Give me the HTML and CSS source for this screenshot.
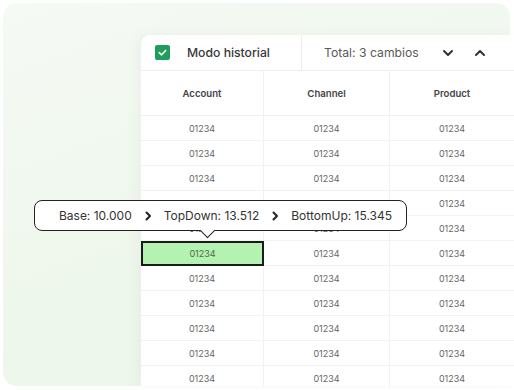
FILE: index.html
```html
<!DOCTYPE html>
<html lang="es">

<head>
    <meta charset="UTF-8">
    <meta name="viewport" content="width=device-width, initial-scale=1.0">
    <title>Modo historial</title>
    <link rel="stylesheet" href="styles.css">
</head>

<body>
    <div class="card">
        <div class="panel">
            <div class="toolbar">
                <div class="mode">
                    <span class="checkbox">
                        <svg width="11" height="11" viewBox="0 0 12 12">
                            <path d="M2.5 6.2 L5 8.5 L9.5 3.8" fill="none" stroke="#fff" stroke-width="1.8" stroke-linecap="round" stroke-linejoin="round"/>
                        </svg>
                    </span>
                    <span class="mode-label">Modo historial</span>
                </div>
                <div class="changes">
                    <span class="total">Total: 3 cambios</span>
                    <svg class="nav" width="12" height="12" viewBox="0 0 12 12">
                        <path d="M2 4 L6 8 L10 4" fill="none" stroke="#333" stroke-width="2" stroke-linecap="round" stroke-linejoin="round"/>
                    </svg>
                    <svg class="nav" width="12" height="12" viewBox="0 0 12 12">
                        <path d="M2 8 L6 4 L10 8" fill="none" stroke="#333" stroke-width="2" stroke-linecap="round" stroke-linejoin="round"/>
                    </svg>
                </div>
            </div>
            <div class="grid">
                <div class="head">Account</div>
                <div class="head">Channel</div>
                <div class="head">Product</div>
            </div>
            <div class="grid" id="rows"></div>
        </div>

        <div class="tooltip">
            <span>Base: 10.000</span>
            <svg width="10" height="10" viewBox="0 0 10 10">
                <path d="M3.5 1.5 L7 5 L3.5 8.5" fill="none" stroke="#222" stroke-width="2" stroke-linecap="round" stroke-linejoin="round"/>
            </svg>
            <span>TopDown: 13.512</span>
            <svg width="10" height="10" viewBox="0 0 10 10">
                <path d="M3.5 1.5 L7 5 L3.5 8.5" fill="none" stroke="#222" stroke-width="2" stroke-linecap="round" stroke-linejoin="round"/>
            </svg>
            <span>BottomUp: 15.345</span>
        </div>
    </div>

    <script>
        // filas de la tabla
        const rows = document.getElementById('rows');
        for (let i = 0; i < 11; i++) {
            for (let j = 0; j < 3; j++) {
                const cell = document.createElement('div');
                cell.className = 'cell';
                if (i === 5 && j === 0) {
                    cell.classList.add('selected');
                }
                cell.textContent = '01234';
                rows.appendChild(cell);
            }
        }
    </script>
</body>

</html>
```

FILE: styles.css
```css
body {
    margin: 0;
    background-color: #fff;
    font-family: Inter, 'Liberation Sans', sans-serif;
    overflow: hidden;
}

.card {
    position: relative;
    margin: 3px;
    width: 507px;
    height: 383px;
    border-radius: 14px;
    background: linear-gradient(160deg, #f5faf4 0%, #eef7ec 60%, #edf6eb 100%);
    padding: 32px 0 0 138px;
    box-sizing: border-box;
}

.panel {
    width: 373px;
    height: 351px;
    background-color: #fff;
    border-top-left-radius: 9px;
    overflow: hidden;
    box-shadow: -4px 0 14px rgba(0, 0, 0, 0.04);
}

.toolbar {
    display: flex;
    height: 36px;
    border-bottom: 1px solid #efefef;
    box-sizing: border-box;
}

.mode {
    display: flex;
    align-items: center;
    width: 161px;
    padding-left: 14px;
    border-right: 1px solid #ececec;
    box-sizing: border-box;
}

.checkbox {
    display: flex;
    align-items: center;
    justify-content: center;
    width: 15px;
    height: 15px;
    border-radius: 2px;
    background-color: #1f9d5c;
}

.mode-label {
    margin-left: 17px;
    font-size: 12.2px;
    font-weight: 500;
    color: #383838;
}

.changes {
    display: flex;
    align-items: center;
    padding-left: 22px;
}

.total {
    font-size: 12.2px;
    color: #5a5a5a;
    margin-right: 23px;
}

.nav {
    margin-right: 20px;
}

.grid {
    display: grid;
    grid-template-columns: 123px 126px 124px;
}

.head {
    height: 45px;
    display: flex;
    align-items: center;
    justify-content: center;
    font-size: 9.6px;
    font-weight: 600;
    color: #444;
    border-right: 1px solid #f0f0f0;
    border-bottom: 1px solid #f0f0f0;
    box-sizing: border-box;
}

.cell {
    height: 25px;
    display: flex;
    align-items: center;
    justify-content: center;
    font-size: 9px;
    color: #666;
    border-right: 1px solid #f2f2f2;
    border-bottom: 1px solid #f2f2f2;
    box-sizing: border-box;
}

.head:nth-child(3n),
.cell:nth-child(3n) {
    border-right: none;
}

.cell.selected {
    background-color: #b3f2b0;
    border: 2px solid #1a1a1a;
    color: #4f6a4f;
}

.tooltip {
    position: absolute;
    left: 31px;
    top: 197px;
    width: 373px;
    height: 31px;
    display: flex;
    align-items: center;
    justify-content: center;
    gap: 11px;
    padding-left: 10px;
    background-color: #fff;
    border: 1px solid #222;
    border-radius: 8px;
    box-sizing: border-box;
    font-size: 12px;
    color: #333;
}

.tooltip::after {
    content: '';
    position: absolute;
    left: 167px;
    bottom: -6px;
    width: 10px;
    height: 10px;
    background-color: #fff;
    border-right: 1px solid #222;
    border-bottom: 1px solid #222;
    transform: rotate(45deg);
}
```
